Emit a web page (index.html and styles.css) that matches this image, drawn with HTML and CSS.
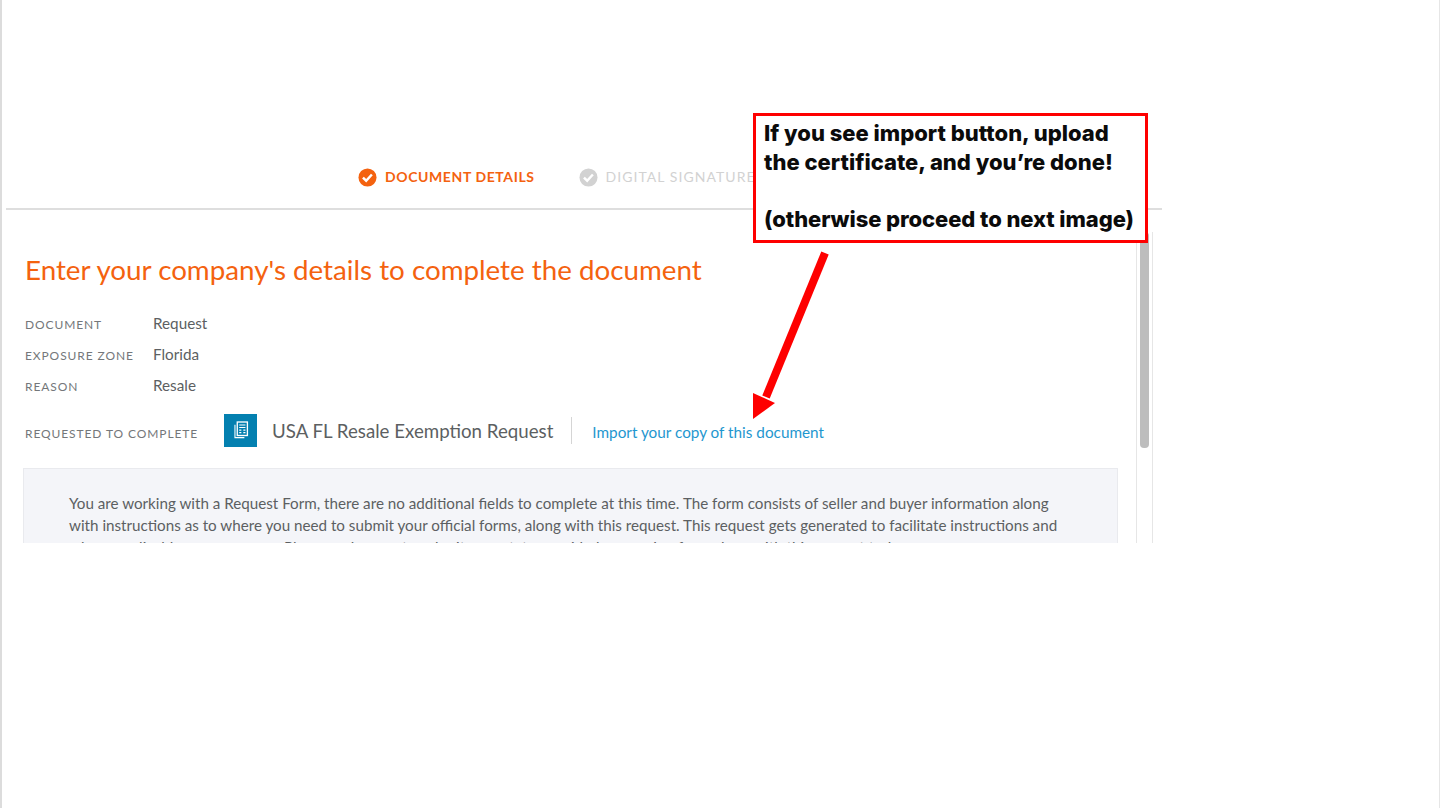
FILE: index.html
```html
<!DOCTYPE html>
<html lang="en">
<head>
<meta charset="utf-8">
<title>Document details</title>
<link rel="stylesheet" href="styles.css">
</head>
<body>
<main class="slide">
  <section class="shot">
    <nav class="steps">
      <div class="step step-active">
        <svg class="step-icon" viewBox="0 0 20 20" aria-hidden="true"><circle cx="10" cy="10" r="9.5" fill="currentColor"/><path d="M5.2 10.2l3.4 3.2 6-6.6" fill="none" stroke="#fff" stroke-width="2.6"/></svg>
        <span>DOCUMENT DETAILS</span>
      </div>
      <div class="step step-idle">
        <svg class="step-icon" viewBox="0 0 20 20" aria-hidden="true"><circle cx="10" cy="10" r="9.5" fill="currentColor"/><path d="M5.2 10.2l3.4 3.2 6-6.6" fill="none" stroke="#fff" stroke-width="2.6"/></svg>
        <span>DIGITAL SIGNATURE</span>
      </div>
    </nav>
    <div class="pane">
      <div class="content">
        <h1 class="title">Enter your company's details to complete the document</h1>
        <dl class="facts">
          <div class="fact"><dt>DOCUMENT</dt><dd>Request</dd></div>
          <div class="fact"><dt>EXPOSURE ZONE</dt><dd>Florida</dd></div>
          <div class="fact"><dt>REASON</dt><dd>Resale</dd></div>
        </dl>
        <div class="request">
          <span class="request-label">REQUESTED TO COMPLETE</span>
          <span class="doc-icon">
            <svg viewBox="0 0 18 20" width="16" height="18" aria-hidden="true" fill="none" stroke="#fff"><path d="M2.2 4v14.6h10.6" stroke-width="1.2"/><rect x="4.8" y="1" width="11.4" height="15.2" stroke-width="1.5"/><path d="M7 4.4h7M7 7.2h7" stroke-width="1.3"/><path d="M7 10.2h2.4M7 13h2.4M11.6 10.2h2.4M11.6 13h2.4" stroke-width="1.5"/></svg>
          </span>
          <span class="doc-name">USA FL Resale Exemption Request</span>
          <a class="import" href="#">Import your copy of this document</a>
        </div>
        <div class="notice">
          <p>You are working with a Request Form, there are no additional fields to complete at this time. The form consists of seller and buyer information along with instructions as to where you need to submit your official forms, along with this request. This request gets generated to facilitate instructions and where applicable, your answers. Please make sure to submit your state-provided exemption form along with this request today.</p>
        </div>
      </div>
      <div class="scroll"><div class="thumb"></div></div>
    </div>
  </section>
  <aside class="callout">
    <p>If you see import button, upload<br>the certificate, and you’re done!</p>
    <p class="callout-gap">(otherwise proceed to next image)</p>
  </aside>
  <svg class="arrow" viewBox="0 0 90 180" aria-hidden="true"><path d="M72 2L13 146" stroke="#fe0000" stroke-width="8" fill="none"/><path d="M0 168L0 142 22 152Z" fill="#fe0000"/></svg>
</main>
</body>
</html>
```
FILE: styles.css
```css
* { box-sizing: border-box; }
html, body { margin: 0; height: 100%; background: #fff; }
body { font-family: "Lato", "Noto Sans", sans-serif; color: #5c5f62; }
.slide { position: relative; width: 1440px; height: 808px; overflow: hidden; border-left: 2px solid #dcdcdc; border-right: 1px solid #e6e6e6; padding: 158px 0 0 4px; }
.shot { width: 1156px; height: 385px; overflow: hidden; display: flex; flex-direction: column; }
.steps { height: 52px; display: flex; align-items: flex-start; gap: 44px; padding: 9px 0 0 352px; border-bottom: 2px solid #dedede; flex: none; }
.step { display: flex; align-items: center; gap: 8px; font-size: 14px; letter-spacing: 0.6px; line-height: 20px; }
.step-icon { width: 19px; height: 19px; flex: none; }
.step-active { color: #f4620f; font-weight: 700; }
.step-idle { color: #d2d2d2; letter-spacing: 1.05px; }
.pane { flex: 1; display: flex; min-height: 0; }
.content { width: 1131px; padding: 42px 0 0 17px; flex: none; }
.title { margin: 0 0 19px 2px; font-size: 27.75px; line-height: 36px; font-weight: 400; color: #f4620f; }
.facts { margin: 0; padding-left: 2px; }
.fact { display: flex; height: 31px; align-items: center; }
.fact dt { width: 128px; padding-top: 3px; font-size: 12px; letter-spacing: 0.9px; color: #74777a; }
.fact dd { margin: 0; font-size: 15.25px; }
.request { display: flex; align-items: center; margin: 10px 0 0 2px; height: 40px; }
.request-label { width: 199px; padding-top: 7px; font-size: 12px; letter-spacing: 0.9px; color: #74777a; }
.doc-icon { width: 33px; height: 33px; background: #0480b0; display: flex; align-items: center; justify-content: center; margin-right: 15px; flex: none; }
.doc-name { padding: 1px 18px 0 0; font-size: 18.7px; border-right: 1px solid #d5d5d5; line-height: 26px; }
.import { margin-left: 20px; padding-top: 4px; font-size: 15.3px; color: #1f97cf; text-decoration: none; }
.notice { margin-top: 18px; width: 1095px; height: 100px; background: #f4f5f9; border: 1px solid #e9eaee; padding: 23px 44px 0 45px; font-size: 15.2px; line-height: 22px; }
.notice p { margin: 0; }
.scroll { width: 17px; margin: 22px 0 0 -1px; border-left: 1px solid #e6e6e6; border-right: 1px solid #e6e6e6; padding: 0 3px; flex: none; }
.thumb { width: 9px; height: 216px; background: #bdbdbd; border-radius: 4px; }
.callout { position: absolute; left: 751px; top: 113px; width: 395px; height: 130px; background: #fff; border: 3px solid #fe0000; padding: 3px 8px 0 8px; font-family: "Inter", sans-serif; font-weight: 800; font-size: 22px; line-height: 29px; color: #0b0b0b; }
.callout p { margin: 0; white-space: nowrap; }
.callout .callout-gap { margin-top: 28px; letter-spacing: -0.08px; }
.arrow { position: absolute; left: 751px; top: 251px; width: 90px; height: 180px; }
```
